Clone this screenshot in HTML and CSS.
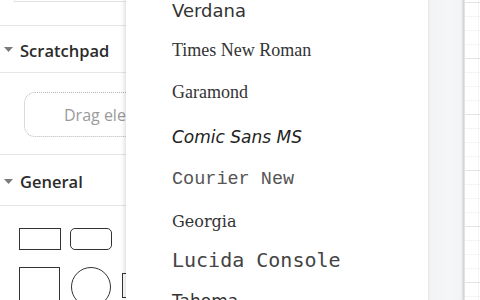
FILE: index.html
```html
<!DOCTYPE html>
<html>
<head>
<meta charset="utf-8">
<link rel="stylesheet" href="styles.css">
</head>
<body>
<div class="app">
  <aside class="sidebar">
    <div class="search-row"><div class="search-box"></div></div>
    <div class="section-head">
      <svg class="caret" width="9" height="5" viewBox="0 0 9 5"><polygon points="0,0 9,0 4.5,5" fill="#7a7a7a"/></svg>
      <span>Scratchpad</span>
    </div>
    <div class="scratch">
      <div class="drop">Drag elements here</div>
    </div>
    <div class="section-head general">
      <svg class="caret" width="9" height="5" viewBox="0 0 9 5"><polygon points="0,0 9,0 4.5,5" fill="#7a7a7a"/></svg>
      <span>General</span>
    </div>
    <div class="shapes">
      <div class="shape rect"></div>
      <div class="shape rrect"></div>
      <div class="shape text-shape"></div>
      <div class="shape square"></div>
      <div class="shape circle"></div>
      <div class="shape thin"></div>
    </div>
  </aside>
  <main class="canvas"></main>

  <div class="menu">
    <ul class="font-list">
      <li class="f-verdana">Verdana</li>
      <li class="f-times">Times New Roman</li>
      <li class="f-garamond">Garamond</li>
      <li class="f-comic">Comic Sans MS</li>
      <li class="f-courier">Courier New</li>
      <li class="f-georgia">Georgia</li>
      <li class="f-lucida">Lucida Console</li>
      <li class="f-tahoma">Tahoma</li>
    </ul>
    <div class="scroll-track"></div>
  </div>
</div>
</body>
</html>
```

FILE: styles.css
```css
* { box-sizing: border-box; }
html, body {
  margin: 0;
  padding: 0;
  width: 480px;
  height: 300px;
  overflow: hidden;
  background: #ffffff;
  font-family: "Open Sans", "Liberation Sans", sans-serif;
  color: #333333;
}
.app {
  position: relative;
  display: flex;
  width: 480px;
  height: 300px;
}
.sidebar {
  width: 463px;
  flex: none;
  background: #ffffff;
  display: flex;
  flex-direction: column;
  overflow: hidden;
}
.sidebar > * { flex: none; }
.search-row {
  height: 26px;
  border-bottom: 1px solid #e6e6e6;
  padding-left: 14px;
  overflow: hidden;
}
.search-box {
  height: 2px;
  border-bottom: 1px solid #e2e2e2;
  border-left: 1px solid #e2e2e2;
}
.section-head {
  height: 47px;
  border-bottom: 1px solid #e6e6e6;
  display: flex;
  align-items: center;
  padding-left: 4px;
  padding-top: 2px;
  gap: 7px;
  font-weight: 600;
  font-size: 16.5px;
  color: #2b2b2b;
}
.section-head.general { height: 51px; padding-top: 3px; }
.caret { flex: none; margin-top: -1px; }
.scratch {
  height: 82px;
  border-bottom: 1px solid #e6e6e6;
  padding: 19px 0 0 24px;
}
.drop {
  width: 190px;
  height: 45px;
  border: 1.5px dotted #b8b8b8;
  border-radius: 11px;
  color: #9a9a9a;
  font-size: 16px;
  display: flex;
  align-items: center;
  padding-left: 39px;
}
.shapes {
  display: grid;
  grid-template-columns: 42px 42px 42px;
  column-gap: 9px;
  row-gap: 17px;
  padding: 22px 0 0 19px;
  align-items: start;
}
.shape { border: 1.6px solid #333333; }
.rect { height: 22px; }
.rrect { height: 22px; border-radius: 5px; }
.text-shape { border: none; }
.square { height: 42px; width: 41px; }
.circle { width: 40px; height: 40px; border-radius: 50%; margin-left: 1px; }
.thin { width: 10px; height: 25px; margin-left: 1px; margin-top: 6px; }

.canvas {
  flex: 1;
  border-left: 1px solid #d8d8d8;
  background-color: #ffffff;
  background-image:
    linear-gradient(#e4e4e4 1px, transparent 1px),
    linear-gradient(90deg, #e4e4e4 1px, transparent 1px),
    linear-gradient(#f4f4f4 1px, transparent 1px),
    linear-gradient(90deg, #f4f4f4 1px, transparent 1px);
  background-size: 56px 56px, 56px 56px, 14px 14px, 14px 14px;
  background-position: 0 2px, 0 0, 0 2px, 0 0;
}

.menu {
  position: absolute;
  left: 126px;
  top: 0;
  width: 337px;
  height: 300px;
  background: #ffffff;
  display: flex;
  box-shadow: -2px 0 4px rgba(0, 0, 0, 0.12);
  overflow: hidden;
}
.font-list {
  list-style: none;
  margin: -10px 0 0 0;
  padding: 0 0 0 46px;
  flex: 1;
  color: #333333;
  white-space: nowrap;
}
.f-verdana { font-family: "DejaVu Sans", sans-serif; font-size: 18px; line-height: 41px; }
.f-times { font-family: "Liberation Serif", serif; font-size: 18px; line-height: 38px; }
.f-garamond { font-family: "Liberation Serif", serif; font-size: 18px; line-height: 47px; }
.f-comic { font-family: "DejaVu Sans", sans-serif; font-style: italic; font-size: 17px; line-height: 42px; color: #222222; }
.f-courier { font-family: "Liberation Mono", monospace; font-size: 18.5px; line-height: 44px; color: #555555; }
.f-georgia { font-family: "DejaVu Serif", serif; font-size: 16px; line-height: 39px; }
.f-lucida { font-family: "DejaVu Sans Mono", monospace; font-size: 20px; line-height: 39px; color: #444444; }
.f-tahoma { font-family: "DejaVu Sans", sans-serif; font-size: 17px; line-height: 42px; }

.scroll-track {
  width: 35px;
  flex: none;
  background: linear-gradient(90deg, #e6e6e6 0px, #f2f3f4 2px, #f4f6f8 60%, #f2f4f6 94%, #dedede 100%);
}
```
